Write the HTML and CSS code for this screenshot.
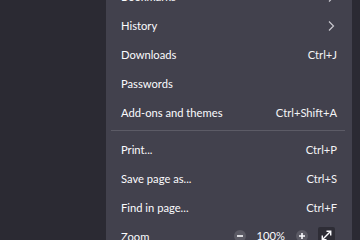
FILE: index.html
```html
<!DOCTYPE html>
<html lang="en">
<head>
<meta charset="utf-8">
<link rel="stylesheet" href="styles.css">
</head>
<body>
<div class="page">
  <div class="menu">
    <div class="item"><span class="label">Bookmarks</span><svg class="chev" viewBox="0 0 16 16"><path d="M6 3.5 10.5 8 6 12.5"/></svg></div>
    <div class="item"><span class="label">History</span><svg class="chev" viewBox="0 0 16 16"><path d="M6 3.5 10.5 8 6 12.5"/></svg></div>
    <div class="item"><span class="label">Downloads</span><span class="key">Ctrl+J</span></div>
    <div class="item"><span class="label">Passwords</span></div>
    <div class="item"><span class="label">Add-ons and themes</span><span class="key">Ctrl+Shift+A</span></div>
    <div class="sep"></div>
    <div class="item"><span class="label">Print...</span><span class="key">Ctrl+P</span></div>
    <div class="item"><span class="label">Save page as...</span><span class="key">Ctrl+S</span></div>
    <div class="item"><span class="label">Find in page...</span><span class="key">Ctrl+F</span></div>
    <div class="item"><span class="label">Zoom</span>
      <div class="zoomctl">
        <span class="circ"><svg viewBox="0 0 12 12"><path d="M3 6h6"/></svg></span>
        <span class="pct">100%</span>
        <span class="circ"><svg viewBox="0 0 12 12"><path d="M3 6h6M6 3v6"/></svg></span>
        <span class="full"><svg viewBox="0 0 16 16"><path d="M3.5 12.5 12.5 3.5M8 3.5h4.5V8M3.5 8v4.5H8"/></svg></span>
      </div>
    </div>
  </div>
</div>
</body>
</html>
```
FILE: styles.css
```css
html, body {
  margin: 0;
  padding: 0;
}
body {
  width: 360px;
  height: 240px;
  overflow: hidden;
  background: #2b2a33;
  font-family: Lato, "Liberation Sans", sans-serif;
  font-size: 11.2px;
  color: #fbfbfe;
}
.page {
  position: relative;
  width: 360px;
  height: 240px;
  overflow: hidden;
}
.menu {
  position: absolute;
  left: 106px;
  top: -18px;
  width: 246px;
  background: #42414d;
}
.item {
  height: 29px;
  display: flex;
  align-items: center;
  justify-content: space-between;
  padding: 0 15px;
}
.key {
  color: #f4f4f7;
}
.chev {
  width: 16px;
  height: 16px;
  margin-right: -2px;
  fill: none;
  stroke: #c9c8cf;
  stroke-width: 1.2;
}
.sep {
  height: 1px;
  background: #5c5b66;
  margin: 3px 7px 4px 5px;
}
.zoomctl {
  display: flex;
  align-items: center;
  margin-top: -2px;
}
.circ {
  width: 12px;
  height: 12px;
  border-radius: 50%;
  background: #5b5a65;
  display: flex;
}
.circ svg {
  width: 12px;
  height: 12px;
  fill: none;
  stroke: #fbfbfe;
  stroke-width: 1.6;
}
.pct {
  margin: 0 11px 0 11px;
}
.full {
  width: 17px;
  height: 17px;
  margin-left: 10px;
  margin-right: 2px;
  border-radius: 2px;
  background: #2e2d36;
  display: flex;
  align-items: center;
  justify-content: center;
}
.full svg {
  width: 15px;
  height: 15px;
  fill: none;
  stroke: #fbfbfe;
  stroke-width: 1.5;
}
```
